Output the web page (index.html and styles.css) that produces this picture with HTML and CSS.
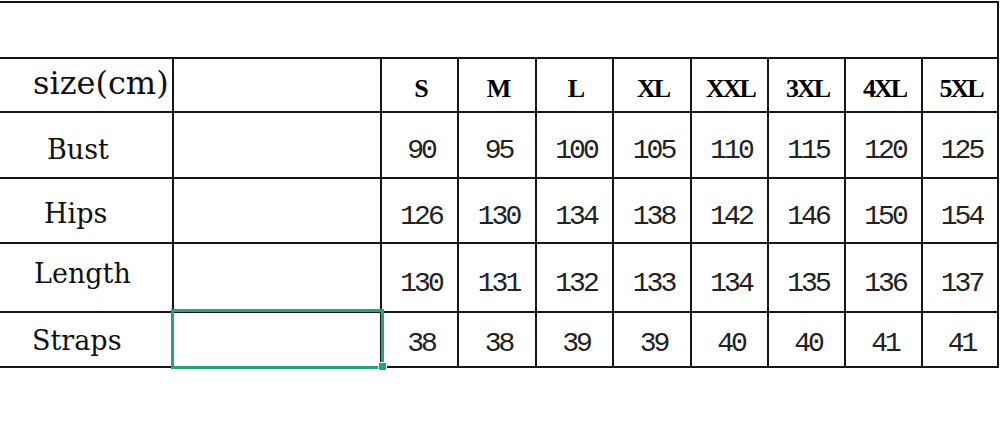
FILE: index.html
```html
<!DOCTYPE html>
<html lang="en">
<head>
<meta charset="utf-8">
<title>Size chart</title>
<link rel="stylesheet" href="styles.css">
</head>
<body>
<div class="sheet">
  <div class="cell cell--title"></div>

  <div class="cell label label--head">size(cm)</div>
  <div class="cell"></div>
  <div class="cell head">S</div>
  <div class="cell head">M</div>
  <div class="cell head">L</div>
  <div class="cell head">XL</div>
  <div class="cell head">XXL</div>
  <div class="cell head">3XL</div>
  <div class="cell head">4XL</div>
  <div class="cell head">5XL</div>

  <div class="cell label label--bust">Bust</div>
  <div class="cell"></div>
  <div class="cell num num--bust">90</div>
  <div class="cell num num--bust">95</div>
  <div class="cell num num--bust">100</div>
  <div class="cell num num--bust">105</div>
  <div class="cell num num--bust">110</div>
  <div class="cell num num--bust">115</div>
  <div class="cell num num--bust">120</div>
  <div class="cell num num--bust">125</div>

  <div class="cell label label--hips">Hips</div>
  <div class="cell"></div>
  <div class="cell num num--hips">126</div>
  <div class="cell num num--hips">130</div>
  <div class="cell num num--hips">134</div>
  <div class="cell num num--hips">138</div>
  <div class="cell num num--hips">142</div>
  <div class="cell num num--hips">146</div>
  <div class="cell num num--hips">150</div>
  <div class="cell num num--hips">154</div>

  <div class="cell label label--length">Length</div>
  <div class="cell"></div>
  <div class="cell num num--length">130</div>
  <div class="cell num num--length">131</div>
  <div class="cell num num--length">132</div>
  <div class="cell num num--length">133</div>
  <div class="cell num num--length">134</div>
  <div class="cell num num--length">135</div>
  <div class="cell num num--length">136</div>
  <div class="cell num num--length">137</div>

  <div class="cell label label--straps">Straps</div>
  <div class="cell cell--selected"><span class="selection"><span class="handle"></span></span></div>
  <div class="cell num num--straps">38</div>
  <div class="cell num num--straps">38</div>
  <div class="cell num num--straps">39</div>
  <div class="cell num num--straps">39</div>
  <div class="cell num num--straps">40</div>
  <div class="cell num num--straps">40</div>
  <div class="cell num num--straps">41</div>
  <div class="cell num num--straps">41</div>
</div>
</body>
</html>
```

FILE: styles.css
```css
* {
  box-sizing: border-box;
}

html,
body {
  margin: 0;
  padding: 0;
  background: #fff;
}

body {
  width: 1000px;
  height: 423px;
  overflow: hidden;
  color: #111;
}

.sheet {
  margin-top: 1px;
  width: 999px;
  display: grid;
  grid-template-columns: 172px 206px 75px 76px 75px 76px 75px 75px 75px 74px;
  grid-template-rows: 54px 52px 64px 63px 67px 53px;
  gap: 2px;
  background: #161616;
  border: 2px solid #161616;
  border-left: 0;
}

.cell {
  background: #fff;
  display: flex;
  align-items: center;
  justify-content: center;
  min-width: 0;
}

.cell--title {
  grid-column: 1 / -1;
}

.label {
  justify-content: flex-start;
  font-family: "DejaVu Serif", serif;
  font-size: 27px;
  line-height: 1;
  white-space: nowrap;
}

.label--head {
  font-size: 32px;
  padding-left: 33px;
  padding-bottom: 4px;
}

.label--bust {
  padding-left: 47px;
  padding-top: 9px;
}

.label--hips {
  padding-left: 44px;
  padding-top: 6px;
}

.label--length {
  padding-left: 34px;
  padding-bottom: 8px;
}

.label--straps {
  padding-left: 32px;
  padding-top: 2px;
}

.head {
  font-family: "Liberation Serif", serif;
  font-weight: bold;
  font-size: 26px;
  line-height: 1;
  letter-spacing: -2px;
  padding-top: 8px;
  padding-left: 2px;
  color: #000;
}

.num {
  font-family: "Liberation Mono", monospace;
  font-size: 28px;
  line-height: 1;
  letter-spacing: -3px;
  padding-left: 3px;
  color: #222;
}

.num--bust {
  padding-top: 11px;
}

.num--hips {
  padding-top: 12px;
}

.num--length {
  padding-top: 12px;
}

.num--straps {
  padding-top: 9px;
}

.cell--selected {
  position: relative;
}

.selection {
  position: absolute;
  left: -3px;
  right: -4px;
  top: -4px;
  bottom: -3px;
  border: 3px solid #22a67a;
}

.handle {
  position: absolute;
  right: -5px;
  bottom: -4px;
  width: 7px;
  height: 7px;
  background: #22a67a;
  box-shadow: 0 0 0 1px #fff;
}
```
